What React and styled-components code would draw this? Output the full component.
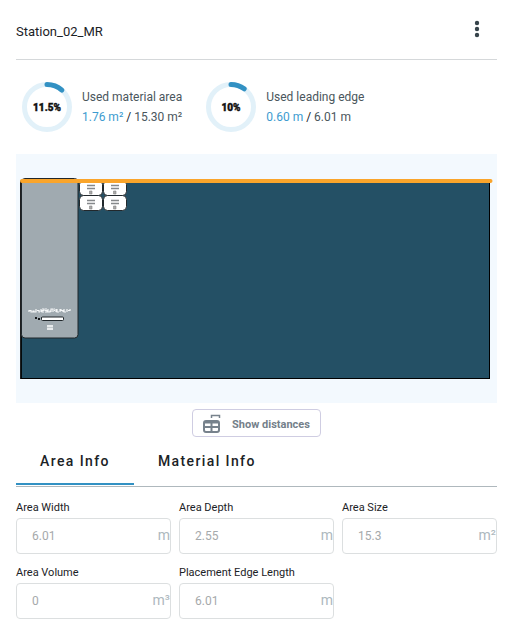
import React from "react";
import { useState } from "react";
import styled, { createGlobalStyle } from "styled-components";

const GlobalStyle = createGlobalStyle`
  * {
    box-sizing: border-box;
  }
  body {
    margin: 0;
    background-color: white;
    color: #1b2226;
    font-family: Roboto, "Liberation Sans", sans-serif;
  }
`;

const stats = [
  { label: "Used material area", percent: 11.5, used: "1.76 m²", total: "15.30 m²" },
  { label: "Used leading edge", percent: 10, used: "0.60 m", total: "6.01 m" },
];

const fields = [
  { id: "areaWidth", label: "Area Width", value: "6.01", unit: "m" },
  { id: "areaDepth", label: "Area Depth", value: "2.55", unit: "m" },
  { id: "areaSize", label: "Area Size", value: "15.3", unit: "m²" },
  { id: "areaVolume", label: "Area Volume", value: "0", unit: "m³" },
  { id: "edgeLength", label: "Placement Edge Length", value: "6.01", unit: "m" },
];

const Ring = ({ percent }) => (
  <RingSvg viewBox="0 0 50 50" role="img" aria-label={percent + "%"}>
    <circle cx="25" cy="25" r="22.5" fill="none" stroke="#e2f1f9" strokeWidth="5" />
    <circle
      cx="25"
      cy="25"
      r="22.5"
      fill="none"
      stroke="#3291c3"
      strokeWidth="5"
      strokeLinecap="round"
      pathLength="100"
      strokeDasharray={percent + " 100"}
      transform="rotate(-90 25 25)"
    />
    <RingText x="25" y="29">
      {percent}%
    </RingText>
  </RingSvg>
);

const Box = ({ x, y }) => (
  <g transform={`translate(${x} ${y})`}>
    <rect x="0.5" y="0.5" width="23" height="15" rx="4" fill="#fff" stroke="#22282c" />
    <path d="M8 5.500h8M8 8.500h8" stroke="#85888b" strokeWidth="1.3" />
    <path d="M10.500 11h2.500v3h-2.500z" fill="#aaa" stroke="#888" strokeWidth="0.6" />
  </g>
);

const StationPlan = () => (
  <PlanSvg viewBox="0 0 481 249" role="img" aria-label="Station layout">
    <rect x="5" y="27" width="468.5" height="197.5" fill="#245065" stroke="#000" />
    <path d="M5 27v198" stroke="#000" strokeWidth="1.5" />
    <rect x="5.5" y="24.5" width="56.5" height="159.5" rx="3.5" fill="#a0aab0" stroke="#20272b" />
    {/* markings on the big part */}
    <path
      d="M13 158v-1.500h2v1.500h2v-1.500m1 0v1.500h2v-3m1 1.500h2v1.500h1m1-3v3m1-3h2v1.500h-2v1.500h2m1-3h2m-2 1.500h2v1.500h-2m3-3v3h2v-1.500m1 1.500v-3h2v3m1-3h1m-1 1.500h1m1-1.500v3m1-3v3h2m1-3v3m1-3v1.500h2v1.500m1-3v3h2m1-3v3m1-1.500h2v-1.500"
      fill="none"
      stroke="#f4f6f7"
      strokeWidth="1.2"
    />
    <path d="M19 164h2m1 1h2m1-1h1" stroke="#171b1e" strokeWidth="2" />
    <rect x="25.5" y="163" width="22" height="3.5" rx="1" fill="#fff" stroke="#20272b" />
    <path d="M31 172h6M31 175h6" stroke="#e8ebed" strokeWidth="2" />
    <path d="M31 173.500h6" stroke="#c3cacd" />
    <Box x={63} y={26} />
    <Box x={87} y={26} />
    <Box x={63} y={41} />
    <Box x={87} y={41} />
    <path d="M6 27h468.500" stroke="#faa52b" strokeWidth="4" strokeLinecap="round" />
  </PlanSvg>
);

const DistanceIcon = () => (
  <svg width="18" height="20" viewBox="0 0 18 20" aria-hidden="true">
    <path d="M8.500 4V1.500h8V4" fill="none" stroke="#77828c" strokeWidth="1.5" />
    <path
      fill="#77828c"
      fillRule="evenodd"
      d="M3 6h11a3 3 0 0 1 3 3v7a3 3 0 0 1-3 3H3a3 3 0 0 1-3-3V9a3 3 0 0 1 3-3zM2 9.500v2.500h5.500V9.500zM9.500 9.500v2.500H15V9.500zM2 14v2.500l1 .5h4.500v-3zM9.500 14v3H14l1-.5V14z"
    />
  </svg>
);

const App = () => {
  const [tab, setTab] = useState("Area Info");

  return (
    <Panel>
      <GlobalStyle />
      <Header>
        <Title>Station_02_MR</Title>
        <MenuButton aria-label="More options">
          <svg width="6" height="18" viewBox="0 0 6 18" fill="#36434a">
            <circle cx="3" cy="3" r="2.200" />
            <circle cx="3" cy="9" r="2.200" />
            <circle cx="3" cy="15" r="2.200" />
          </svg>
        </MenuButton>
      </Header>

      <Stats>
        {stats.map((s) => (
          <Stat key={s.label}>
            <Ring percent={s.percent} />
            <StatText>
              <div>{s.label}</div>
              <div>
                <Used>{s.used}</Used> <Slash>/</Slash> {s.total}
              </div>
            </StatText>
          </Stat>
        ))}
      </Stats>

      <StationPlan />

      <DistanceButton>
        <DistanceIcon />
        Show distances
      </DistanceButton>

      <Tabs role="tablist">
        {["Area Info", "Material Info"].map((name) => (
          <Tab
            key={name}
            role="tab"
            aria-selected={tab === name}
            $active={tab === name}
            onClick={() => setTab(name)}
          >
            {name}
          </Tab>
        ))}
      </Tabs>

      <Fields>
        {fields.map((f) => (
          <Field key={f.id}>
            <Label htmlFor={f.id}>{f.label}</Label>
            <InputBox>
              <Input id={f.id} type="text" defaultValue={f.value} disabled />
              <Unit>{f.unit}</Unit>
            </InputBox>
          </Field>
        ))}
      </Fields>
    </Panel>
  );
};

const Panel = styled.main`
  display: flex;
  flex-direction: column;
  padding: 0 13px 11px 16px;
`;

const Header = styled.header`
  display: flex;
  align-items: center;
  justify-content: space-between;
  height: 60px;
  padding-top: 4px;
  border-bottom: 1px solid #d5d8da;
`;

const Title = styled.h1`
  margin: 0;
  font-size: 13px;
  font-weight: 400;
`;

const MenuButton = styled.button`
  display: flex;
  padding: 8px 17px 14px;
  background: none;
  border: none;
  cursor: pointer;
`;

const Stats = styled.section`
  display: flex;
  gap: 24px;
  padding: 22px 6px;
`;

const Stat = styled.div`
  display: flex;
  align-items: center;
  gap: 10px;
`;

const RingSvg = styled.svg`
  width: 50px;
  height: 50px;
`;

const RingText = styled.text`
  font-size: 10px;
  font-weight: 900;
  text-anchor: middle;
  fill: #111;
  stroke: #111;
  stroke-width: 0.4;
`;

const StatText = styled.div`
  color: #4a565c;
  font-size: 12px;
  line-height: 20px;
`;

const Used = styled.span`
  color: #3d9bd0;
`;

const Slash = styled.span`
  color: #1b2226;
`;

const PlanSvg = styled.svg`
  width: 100%;
  background-color: #f3f9fe;
`;

const DistanceButton = styled.button`
  display: flex;
  align-items: center;
  align-self: center;
  gap: 11px;
  height: 28px;
  margin-top: 6px;
  padding: 2px 10px 0;
  background-color: white;
  border: 1px solid #cfcde2;
  border-radius: 4px;
  color: #74808a;
  font-family: inherit;
  font-size: 11px;
  font-weight: 700;
  cursor: pointer;
`;

const Tabs = styled.div`
  display: flex;
  height: 50px;
  padding-bottom: 1px;
  border-bottom: 1px solid #afb8bd;
`;

const Tab = styled.button`
  padding: 2px 24px 0;
  background: none;
  border: none;
  border-bottom: 2px solid ${(props) => (props.$active ? "#3291c3" : "transparent")};
  color: #1b2226;
  font-family: inherit;
  font-size: 14px;
  font-weight: 500;
  letter-spacing: 0.1em;
  cursor: pointer;
`;

const Fields = styled.div`
  display: grid;
  grid-template-columns: repeat(3, 1fr);
  gap: 10px 8px;
  padding-top: 12px;
`;

const Field = styled.div`
  display: flex;
  flex-direction: column;
  gap: 2px;
  min-width: 0;
`;

const Label = styled.label`
  font-size: 11px;
  line-height: 17px;
`;

const InputBox = styled.div`
  display: flex;
  align-items: center;
  height: 36px;
  border: 1px solid #dcdfe0;
  border-radius: 4px;
`;

const Input = styled.input`
  flex: 1;
  min-width: 0;
  padding: 0 0 0 15px;
  background: none;
  border: none;
  color: #a6a9ab;
  font-family: inherit;
  font-size: 12px;
`;

const Unit = styled.span`
  padding-bottom: 2px;
  color: #adb8be;
  font-size: 14px;
`;

export default App;
